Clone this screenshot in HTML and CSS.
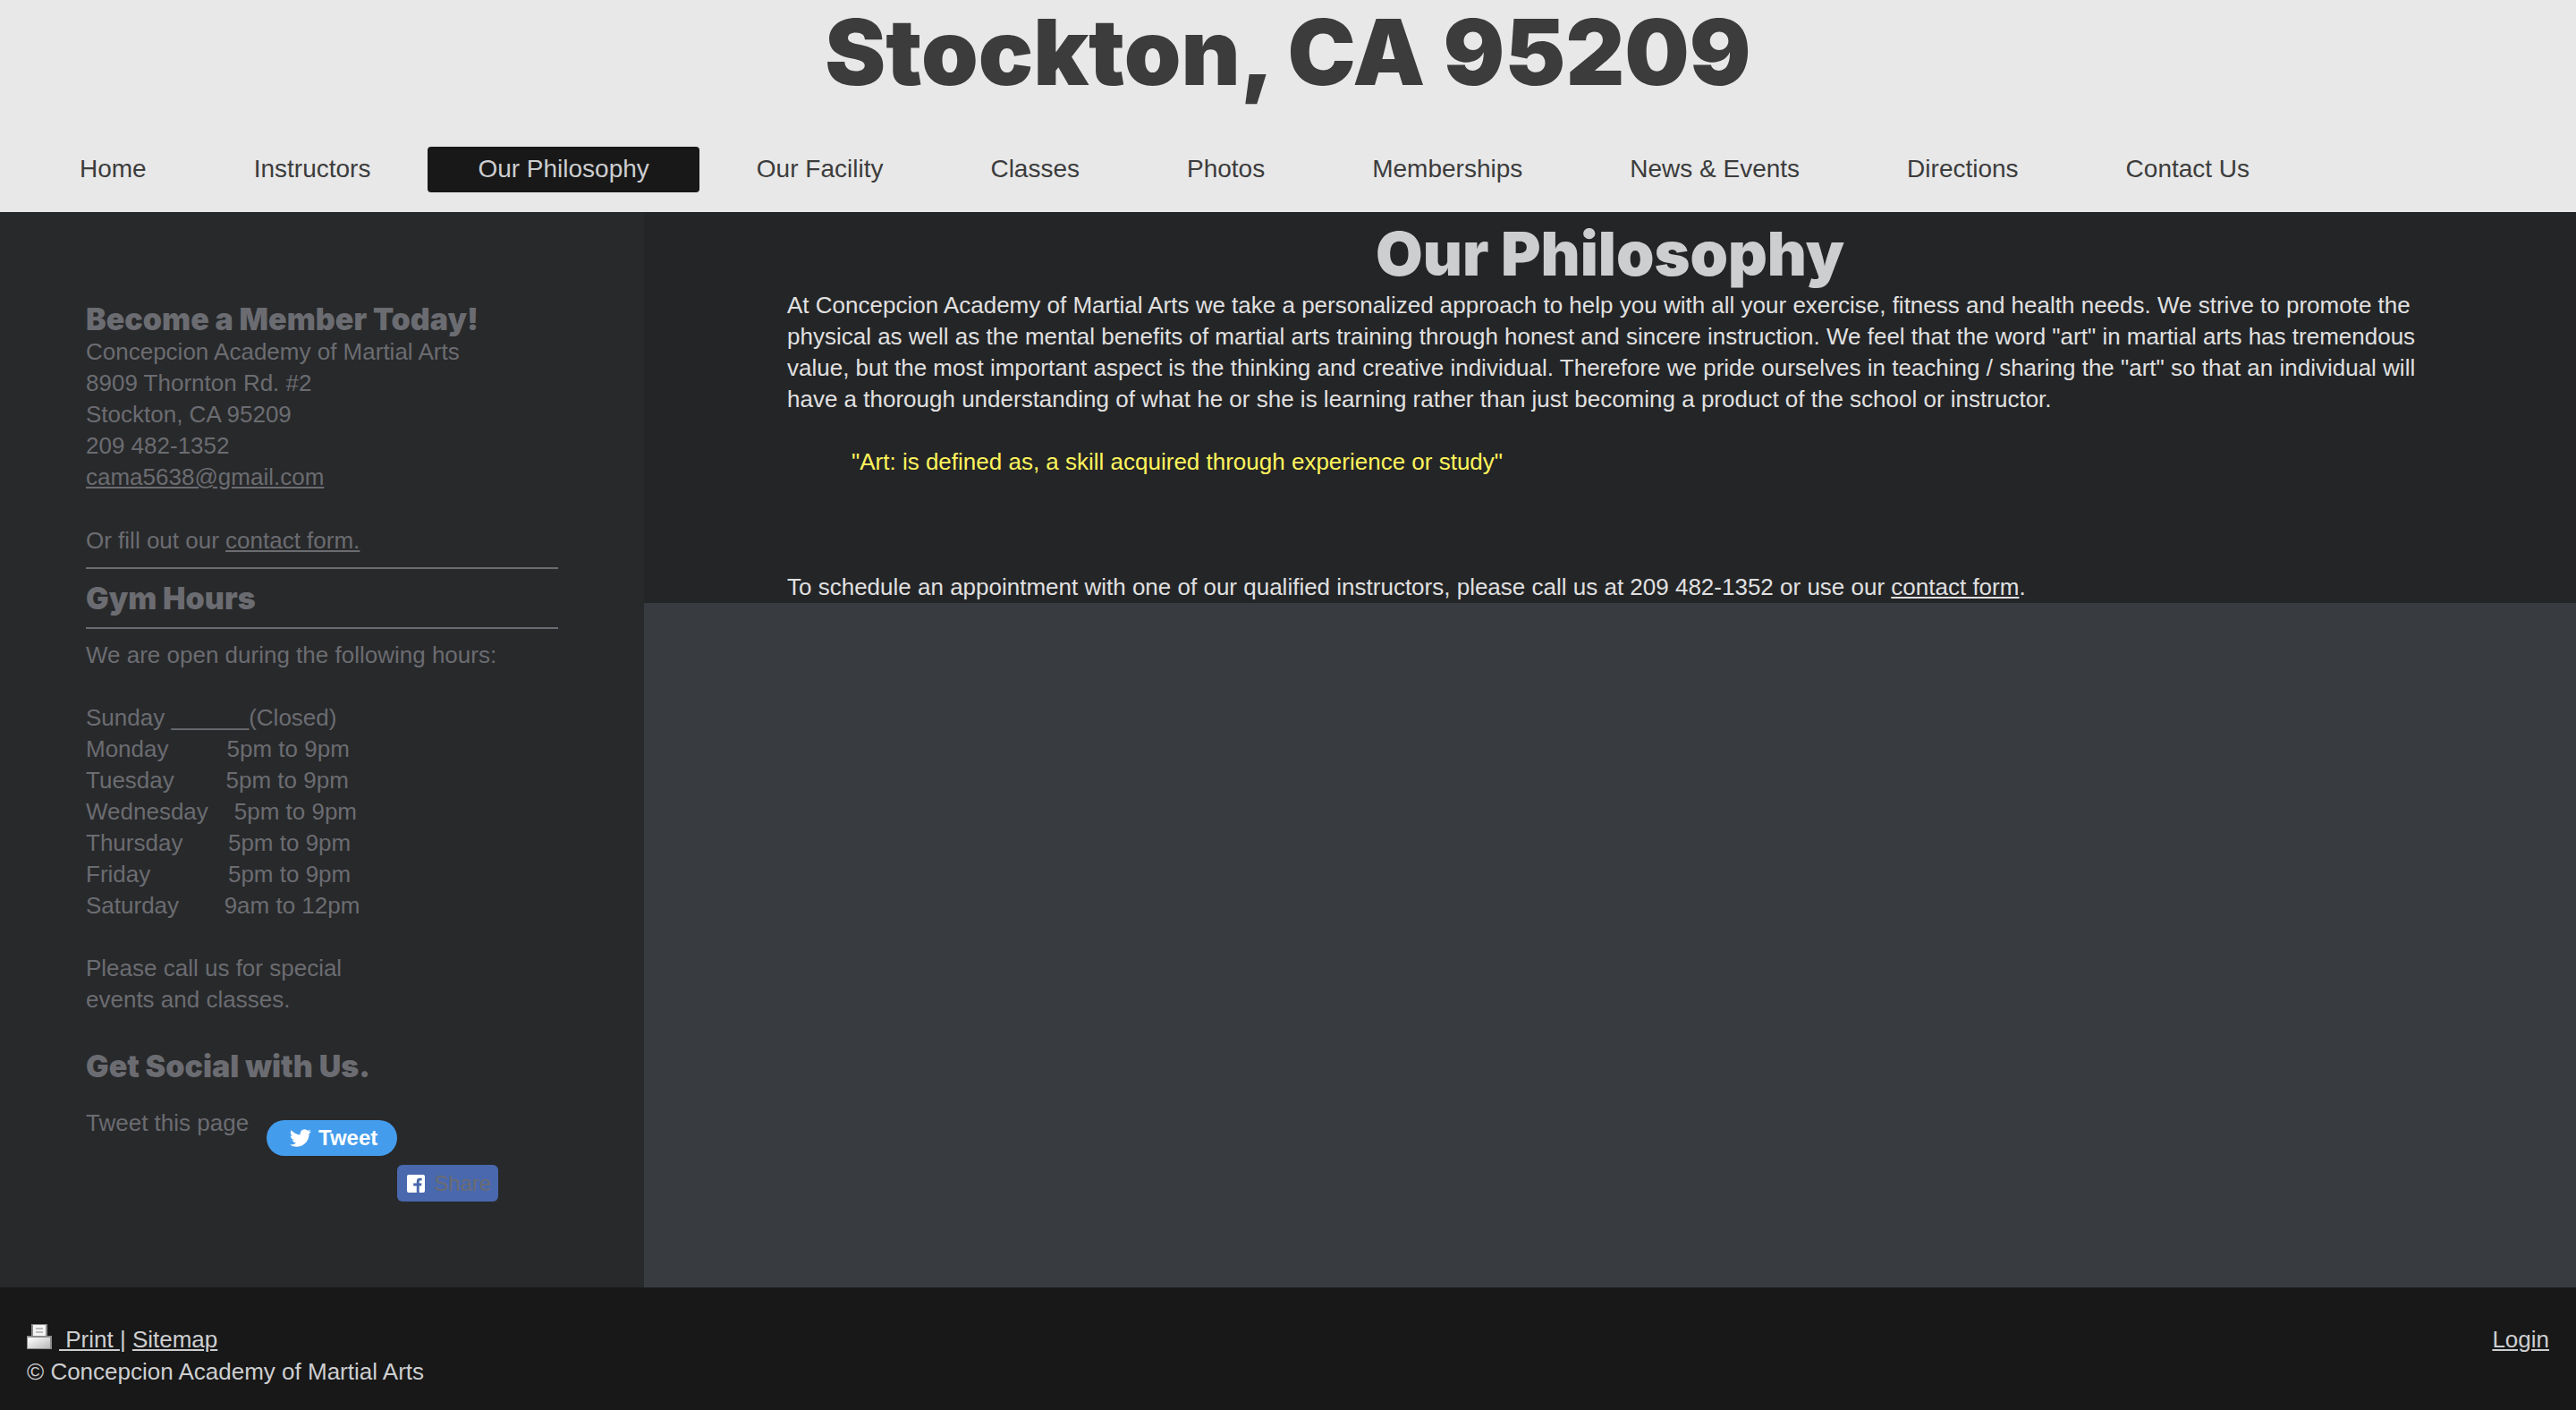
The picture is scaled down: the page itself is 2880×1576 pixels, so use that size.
FILE: index.html
```html
<!DOCTYPE html>
<html lang="en">
<head>
<meta charset="utf-8">
<title>Concepcion Academy of Martial Arts - Our Philosophy</title>
<link rel="stylesheet" href="styles.css">
</head>
<body>
<header class="header">
  <h1 class="site-title">Stockton, CA 95209</h1>
  <nav class="nav">
    <a class="nav-link" href="#">Home</a>
    <a class="nav-link" href="#">Instructors</a>
    <a class="nav-link nav-link-current" href="#" aria-current="page">Our Philosophy</a>
    <a class="nav-link" href="#">Our Facility</a>
    <a class="nav-link" href="#">Classes</a>
    <a class="nav-link" href="#">Photos</a>
    <a class="nav-link" href="#">Memberships</a>
    <a class="nav-link" href="#">News &amp; Events</a>
    <a class="nav-link" href="#">Directions</a>
    <a class="nav-link" href="#">Contact Us</a>
  </nav>
</header>
<div class="columns">
  <aside class="sidebar">
    <h2 class="side-title">Become a Member Today!</h2>
    <address class="address">Concepcion Academy of Martial Arts<br>8909 Thornton Rd. #2<br>Stockton, CA 95209<br>209 482-1352<br><a href="#">cama5638@gmail.com</a></address>
    <p class="side-text">Or fill out our <a href="#">contact form.</a></p>
    <hr class="rule">
    <h2 class="side-title side-title-ruled">Gym Hours</h2>
    <hr class="rule">
    <p class="side-intro">We are open during the following hours:</p>
    <p class="side-text hours">Sunday ______(Closed)
Monday         5pm to 9pm
Tuesday        5pm to 9pm
Wednesday    5pm to 9pm
Thursday       5pm to 9pm
Friday            5pm to 9pm
Saturday       9am to 12pm</p>
    <p class="side-text">Please call us for special<br>events and classes.</p>
    <h2 class="side-title side-title-social">Get Social with Us.</h2>
    <div class="social">
      <span>Tweet this page</span>
      <button class="tweet" type="button">
        <svg class="tweet-icon" viewBox="0 0 24 24" aria-hidden="true"><path fill="#fff" d="M23.95 4.57a10 10 0 0 1-2.82.77 4.96 4.96 0 0 0 2.16-2.72c-.95.55-2 .95-3.13 1.18a4.92 4.92 0 0 0-8.38 4.48C7.69 8.1 4.07 6.13 1.64 3.16a4.93 4.93 0 0 0 1.52 6.57 4.9 4.9 0 0 1-2.23-.61v.06a4.92 4.92 0 0 0 3.95 4.83 5 5 0 0 1-2.21.08 4.94 4.94 0 0 0 4.6 3.42A9.87 9.87 0 0 1 0 19.54a13.99 13.99 0 0 0 7.55 2.21c9.05 0 14-7.5 14-13.98 0-.21 0-.42-.02-.63a9.94 9.94 0 0 0 2.42-2.57z"/></svg>Tweet</button>
      <button class="share" type="button">
        <svg class="share-icon" viewBox="0 0 20 20" aria-hidden="true"><rect width="20" height="20" rx="2" fill="#fff"/><path fill="#4968ad" d="M10.8 20v-7.6H7.2V9.4h3.6V7.5c0-2.7 1.5-3.7 3.6-3.7 1 0 1.8.1 2.2.1v2.6h-1.5c-1.2 0-1.4.6-1.4 1.4v1.5h2.8l-.4 3h-2.4V20z"/></svg>Share</button>
    </div>
  </aside>
  <main class="main">
    <article class="article">
      <h2 class="page-title">Our Philosophy</h2>
      <p class="paragraph">At Concepcion Academy of Martial Arts we take a personalized approach to help you with all your exercise, fitness and health needs. We strive to promote the physical as well as the mental benefits of martial arts training through honest and sincere instruction. We feel that the word "art" in martial arts has tremendous value, but the most important aspect is the thinking and creative individual. Therefore we pride ourselves in teaching / sharing the "art" so that an individual will have a thorough understanding of what he or she is learning rather than just becoming a product of the school or instructor.</p>
      <p class="quote">"Art: is defined as, a skill acquired through experience or study"</p>
      <p class="paragraph">To schedule an appointment with one of our qualified instructors, please call us at 209 482-1352 or use our <a href="#">contact form</a>.</p>
    </article>
  </main>
</div>
<footer class="footer">
  <div>
    <div class="footer-links">
      <svg class="print-icon" viewBox="0 0 28 28" aria-hidden="true">
        <defs>
          <linearGradient id="tray" x1="0" y1="0" x2="1" y2="1"><stop offset="0" stop-color="#fff"/><stop offset="1" stop-color="#b8b8b8"/></linearGradient>
        </defs>
        <rect x="5" y="0" width="18" height="16" fill="#8c8c8c"/>
        <rect x="7" y="1" width="14" height="15" fill="#f4f4f4"/>
        <path d="M10 5h8M10 9h8" stroke="#bdbdbd" stroke-width="2"/>
        <rect x="0" y="13" width="28" height="15" fill="#8c8c8c"/>
        <rect x="1" y="15" width="25" height="12" fill="url(#tray)"/>
      </svg>
      <a class="print" href="#">&nbsp;Print&nbsp;</a><span>| <a href="#">Sitemap</a></span>
    </div>
    <div>© Concepcion Academy of Martial Arts</div>
  </div>
  <a class="login" href="#">Login</a>
</footer>
</body>
</html>
```
FILE: styles.css
```css
* {
  box-sizing: border-box;
}

body {
  margin: 0;
  min-height: 100vh;
  display: flex;
  flex-direction: column;
  background: #181818;
  font-family: "Liberation Sans", Arial, sans-serif;
  font-size: 26px;
  line-height: 35px;
}

h1, h2, p {
  margin: 0;
}

a {
  color: inherit;
}

.site-title, .side-title, .page-title {
  font-family: "Arial Black", Inter, sans-serif;
  font-weight: 900;
}

.header {
  background: #e8e8e8;
  color: #3c3c3c;
  padding-bottom: 22px;
}

.site-title {
  padding-bottom: 48px;
  font-size: 102px;
  line-height: 116px;
  text-align: center;
}

.nav {
  display: flex;
  gap: 8px;
  padding: 0 33px;
}

.nav-link {
  padding: 0 56px 2px;
  border-radius: 4px;
  font-size: 28px;
  line-height: 49px;
  white-space: nowrap;
  text-decoration: none;
}

.nav-link-current {
  background: #181818;
  color: #cdced0;
}

.columns {
  flex: 1;
  display: flex;
}

.sidebar {
  width: 25%;
  padding: 101px 96px 92px;
  background: #28292b;
  color: #6b6c71;
}

.side-title {
  font-size: 34px;
  line-height: 38px;
}

.address {
  margin-bottom: 36px;
  font-style: normal;
}

.rule {
  height: 2px;
  margin: 12px 0;
  border: 0;
  background: #6b6c71;
}

.side-title-ruled {
  line-height: 41px;
}

.side-intro {
  margin-bottom: 35px;
}

.hours {
  margin-bottom: 35px;
  white-space: pre;
}

.side-title-social {
  margin-top: 38px;
}

.social {
  display: flex;
  align-items: flex-start;
  margin-top: 27px;
  white-space: nowrap;
}

.tweet, .share {
  display: flex;
  align-items: center;
  border: 0;
  padding: 0;
  font-family: inherit;
  font-size: 24px;
}

.tweet {
  justify-content: center;
  gap: 8px;
  width: 146px;
  height: 40px;
  margin: 14px 0 0 20px;
  padding-left: 4px;
  border-radius: 20px;
  background: #449cec;
  color: #fff;
  font-weight: bold;
}

.tweet-icon {
  width: 24px;
  height: 24px;
}

.share {
  gap: 10px;
  height: 41px;
  margin-top: 64px;
  padding: 0 8px 0 11px;
  border-radius: 6px;
  background: #4968ad;
  color: #6b6c71;
}

.share-icon {
  width: 20px;
  height: 20px;
}

.main {
  flex: 1;
  background: #383b40;
}

.article {
  padding: 0 160px;
  background: #242527;
  color: #e0e0e0;
}

.page-title {
  padding: 11px 0 6px;
  color: #cdced0;
  font-size: 68px;
  line-height: 70px;
  text-align: center;
}

.quote {
  padding: 35px 72px 105px;
  color: #fff45c;
}

.footer {
  display: flex;
  justify-content: space-between;
  padding: 41px 30px 25px;
  background: #181818;
  color: #cdced0;
}

.footer-links {
  display: flex;
  margin-bottom: 1px;
}

.print-icon {
  width: 28px;
  height: 28px;
  margin-right: 8px;
}
```
